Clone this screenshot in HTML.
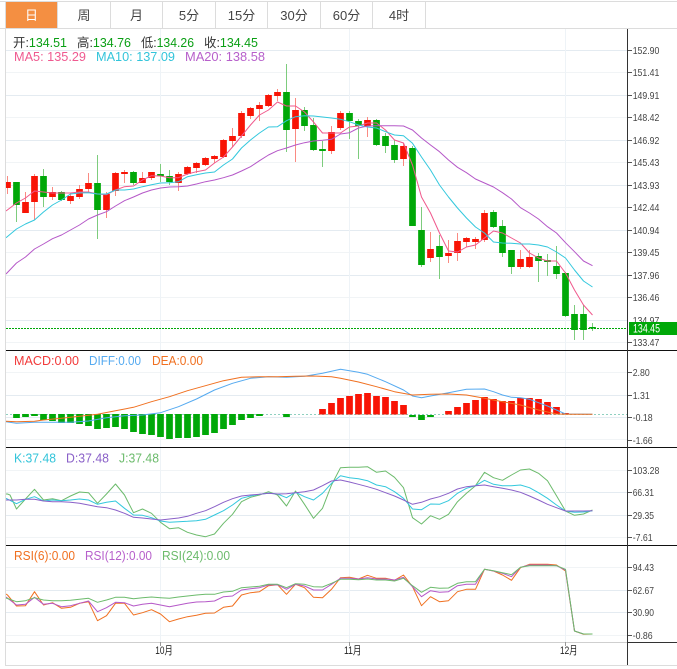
<!DOCTYPE html>
<html>
<head>
<meta charset="utf-8">
<style>
html,body{margin:0;padding:0;background:#fff;width:677px;height:669px;overflow:hidden}
svg{display:block}
text{font-family:"Liberation Sans","Noto Sans CJK SC",sans-serif}
.ax{font-size:10.5px;fill:#444}
.t{font-size:12.5px}
.tab{font-size:13px;fill:#444;text-anchor:middle}
.dt{font-size:11px;fill:#222}
</style>
</head>
<body>
<svg width="677" height="669" viewBox="0 0 677 669" xmlns="http://www.w3.org/2000/svg">
<rect width="677" height="669" fill="#fff"/>

<!-- grid -->
<g fill="none" stroke-width="1">
<path stroke="#f1f4f6" d="M6 72.5H627M6 117.5H627M6 162.5H627M6 207.5H627M6 252.5H627M6 297.5H627M6 342.5H627M6 372.5H627M6 439.5H627M6 470.5H627M6 537.5H627M6 567.5H627M6 635.5H627"/>
<path stroke="#e4ebf1" d="M6 50.5H627M6 95.5H627M6 140.5H627M6 185.5H627M6 230.5H627M6 275.5H627M6 320.5H627M6 395.5H627M6 417.5H627M6 492.5H627M6 515.5H627M6 590.5H627M6 612.5H627"/>
<path stroke="#eef3f7" d="M160.5 29V642M349.5 29V642M565.5 29V642"/>
</g>

<!-- candle wicks -->
<path fill="none" stroke="#fa8a82" stroke-width="1" d="M7.5 176V194M25.5 192V213M34.5 174V220M52.5 187V200M70.5 193V204M79.5 185V199M88.5 173V192M106.5 192V218M115.5 172V196M124.5 170V183M142.5 172V183M151.5 172V180M178.5 172V191M187.5 166V175M196.5 162V173M205.5 157V166M214.5 155V163M223.5 139V158M232.5 128V147M241.5 111V138M250.5 107V119M259.5 102V121M268.5 94V107M277.5 89V101M295.5 98V162M331.5 126V154M340.5 111V130M367.5 117V137M403.5 143V166M430.5 232V262M448.5 240V263M457.5 233V261M466.5 237V247M475.5 237V249M484.5 210V242M520.5 250V269M529.5 250V268"/>
<path fill="none" stroke="#7dcc7d" stroke-width="1" d="M16.5 182V222M43.5 169V207M61.5 191V201M97.5 155V239M133.5 171V185M160.5 164V182M169.5 170V185M286.5 64V152M304.5 107V131M313.5 118V151M322.5 141V167M349.5 111V139M358.5 119V159M376.5 119V146M385.5 133V153M394.5 140V163M412.5 146V226M421.5 207V267M439.5 235V279M493.5 210V228M502.5 220V257M511.5 250V274M538.5 253V282M547.5 254V276M556.5 246V279M565.5 272V317M574.5 305V340M583.5 305V340M592.5 323V331"/>

<!-- candle bodies -->
<path fill="none" stroke="#f81405" stroke-width="6.7" d="M7.5 182V188M25.5 202V213M34.5 176V202M52.5 192V197M70.5 196V201M79.5 189V197M88.5 183V189M106.5 194V210M115.5 173V191M124.5 172V174M142.5 178V183M151.5 172V178M178.5 174V183M187.5 167V174M196.5 163V168M205.5 158V165M214.5 156V159M223.5 140V157M232.5 136V141M241.5 113V136M250.5 108V116M259.5 105V109M268.5 95V106M277.5 92V96M295.5 110V129M331.5 132V151M340.5 113V128M367.5 120V126M403.5 146V159M430.5 249V258M448.5 253V256M457.5 241V253M466.5 238V242M475.5 239V242M484.5 213V240M520.5 259V267M529.5 257V267"/>
<path fill="none" stroke="#00a808" stroke-width="6.7" d="M16.5 182V205M43.5 176V197M61.5 192V200M97.5 183V210M133.5 172V183M160.5 174V176M169.5 176V182M286.5 92V130M304.5 110V126M313.5 125V150M322.5 149V151M349.5 113V121M358.5 121V126M376.5 120V145M385.5 136V146M394.5 145V160M412.5 148V226M421.5 230V265M439.5 246V257M493.5 212V227M502.5 226V253M511.5 250V267M538.5 256V261M547.5 260V262M556.5 266V274M565.5 273V316M574.5 314V330M583.5 314V330M592.5 327V328.5"/>

<!-- MA lines -->
<g fill="none" stroke-width="1" stroke-linejoin="round">
<polyline stroke="#f0588c" points="6,211 16.5,203 25.5,198 34.5,191 43.5,192 52.5,193 61.5,193 70.5,193 79.5,192 88.5,192 97.5,194 106.5,194.7 115.5,190 124.5,186.7 133.5,186 142.5,180 151.5,175.7 160.5,176 169.5,177.7 178.5,177.7 187.5,174 196.5,171.7 205.5,170 214.5,163 223.5,157 232.5,147 241.5,136 250.5,125 259.5,115 268.5,110 277.5,102 286.5,106 295.5,106 304.5,112 313.5,122 322.5,133 331.5,133 340.5,133 349.5,127 358.5,126 367.5,123 376.5,123 385.5,130 394.5,140 403.5,143 412.5,165 421.5,197 430.5,213 439.5,233 448.5,251 457.5,252 466.5,247 475.5,245 484.5,238 493.5,231 502.5,233 511.5,238 520.5,243 529.5,253 538.5,258 547.5,261 556.5,261 565.5,273 574.5,290 583.5,305 592.5,315"/>
<polyline stroke="#33c8dd" points="6,237.7 16.5,229 25.5,224 34.5,220 43.5,212 52.5,205 61.5,200 70.5,194 79.5,193 88.5,192.7 97.5,194 106.5,194 115.5,190 124.5,190 133.5,189 142.5,186.7 151.5,184.7 160.5,183 169.5,182.7 178.5,181.7 187.5,176.7 196.5,174.7 205.5,173 214.5,172 223.5,165 232.5,159 241.5,148 250.5,140 259.5,133 268.5,127 277.5,126.7 286.5,120.7 295.5,116.7 304.5,115.7 313.5,116 322.5,117 331.5,118 340.5,119.3 349.5,121.7 358.5,125 367.5,127 376.5,128 385.5,131.7 394.5,135 403.5,135.7 412.5,143.3 421.5,157 430.5,170 439.5,185 448.5,197 457.5,208 466.5,218 475.5,227 484.5,233 493.5,242 502.5,243 511.5,243.3 520.5,244 529.5,244 538.5,245 547.5,247 556.5,252 565.5,258 574.5,270 583.5,281 592.5,287"/>
<polyline stroke="#b558c8" points="6,274 16.5,263 25.5,257 34.5,249 43.5,244 52.5,238.7 61.5,235 70.5,230 79.5,225 88.5,219 97.5,215 106.5,211.7 115.5,206 124.5,200.7 133.5,197 142.5,193 151.5,190 160.5,188 169.5,187 178.5,186.7 187.5,186 196.5,184 205.5,181.7 214.5,180 223.5,177.7 232.5,175 241.5,171 250.5,166.7 259.5,160.7 268.5,155 277.5,150.7 286.5,148 295.5,145 304.5,142.7 313.5,141 322.5,140.3 331.5,139.3 340.5,134 349.5,132.7 358.5,128 367.5,126 376.5,125.7 385.5,125.7 394.5,125.7 403.5,126 412.5,130 421.5,138 430.5,145 439.5,151.7 448.5,160 457.5,167.3 466.5,172.7 475.5,179 484.5,183 493.5,187 502.5,192.7 511.5,199 520.5,207.7 529.5,213 538.5,219 547.5,226.7 556.5,233 565.5,242.7 574.5,251.7 583.5,261 592.5,265.7"/>
</g>

<!-- last price dotted line -->
<path fill="none" stroke="#00a808" stroke-width="1" stroke-dasharray="2 1" d="M6 328.5H628"/>

<!-- MACD -->
<path fill="none" stroke="#8fd0c0" stroke-width="1" stroke-dasharray="2 2" d="M6 414.5H627"/>
<path fill="none" stroke="#00a808" stroke-width="6.7" d="M16.5 414V418M25.5 414V417M34.5 414V416M43.5 414V420M52.5 414V421M61.5 414V423M70.5 414V423M79.5 414V424M88.5 414V426M97.5 414V429M106.5 414V428M115.5 414V427M124.5 414V429M133.5 414V432M142.5 414V434M151.5 414V435M160.5 414V437M169.5 414V439M178.5 414V438M187.5 414V438M196.5 414V437M205.5 414V435M214.5 414V433M223.5 414V429M232.5 414V425M241.5 414V420M250.5 414V418M259.5 414V416M286.5 414V417M412.5 415V417M421.5 415V420M430.5 415V417"/>
<path fill="none" stroke="#f81405" stroke-width="6.7" d="M322.5 409V414.5M331.5 403V414.5M340.5 398V414.5M349.5 396V414.5M358.5 394V414.5M367.5 393V414.5M376.5 396V414.5M385.5 397V414.5M394.5 401V414.5M403.5 405V414.5M448.5 411V414.5M457.5 407V414.5M466.5 403V414.5M475.5 400V414.5M484.5 397V414.5M493.5 399V414.5M502.5 401V414.5M511.5 401V414.5M520.5 398V414.5M529.5 398V414.5M538.5 399V414.5M547.5 402V414.5M556.5 407V414.5M565.5 413V414.5"/>
<g fill="none" stroke-width="1" stroke-linejoin="round">
<polyline stroke="#55aaf0" points="6,421.7 16.5,423.3 34.5,422.3 52.5,422.3 70.5,422.3 88.5,421 106.5,417.7 124.5,415.7 142.5,415 160.5,412.7 178.5,406.7 196.5,399 214.5,390 232.5,383.3 250.5,378.3 268.5,376.7 286.5,377.3 304.5,376.3 322.5,373.3 340.5,369.3 358.5,372.3 367.5,374.3 385.5,381.7 403.5,390 412.5,396 421.5,397.7 430.5,396 448.5,392.7 466.5,389.3 484.5,389 493.5,391.7 502.5,395 511.5,397.3 520.5,397.7 529.5,399.3 538.5,402.7 547.5,406 556.5,410 565.5,414 592.5,414.3"/>
<polyline stroke="#f07020" points="6,421.3 16.5,421.7 34.5,421.3 43.5,420 61.5,418.3 79.5,416.3 97.5,414.3 115.5,410.7 133.5,407.3 151.5,401.7 169.5,396.7 187.5,390.7 205.5,385.7 223.5,380.7 241.5,377.3 259.5,376.7 277.5,376.7 295.5,376.3 313.5,376 331.5,376.7 340.5,378.3 358.5,382 376.5,386.7 394.5,391.7 412.5,395 430.5,394.3 448.5,394 466.5,395 484.5,398.3 502.5,401.7 520.5,405 538.5,410 556.5,414 565.5,414.3 592.5,414.3"/>
</g>

<!-- KDJ -->
<g fill="none" stroke-width="1" stroke-linejoin="round">
<polyline stroke="#6cbb6c" points="6,494 7.5,494 10,495 16.5,509 25.5,499 34.5,489.3 43.5,500 52.5,498.7 61.5,500.7 70.5,496 79.5,492 88.5,492.7 97.5,503.3 106.5,494 115.5,484 124.5,495 133.5,512.7 142.5,509 151.5,513.3 160.5,522.3 169.5,528.7 178.5,527.7 187.5,532.3 196.5,535 205.5,536.7 214.5,534 223.5,523.3 232.5,514.3 241.5,501.7 250.5,497.3 259.5,495 268.5,491.7 277.5,495 286.5,506 295.5,491 304.5,504.3 313.5,518.3 322.5,508.3 331.5,485 340.5,467.7 349.5,467.3 358.5,467.3 367.5,466.7 376.5,472.3 385.5,471 394.5,477.3 403.5,487.7 412.5,517.7 421.5,524 430.5,515.7 439.5,519.3 448.5,514.3 457.5,501.7 466.5,493.3 475.5,485.7 484.5,472.3 493.5,477.7 502.5,480.3 511.5,475 520.5,470 529.5,469 538.5,473.3 547.5,480.7 556.5,495.7 565.5,511 574.5,515.3 583.5,514 592.5,510"/>
<polyline stroke="#33c8dd" points="6,498.3 16.5,503.7 25.5,499.3 34.5,496.7 43.5,501 52.5,500 61.5,500.7 70.5,500 79.5,499 88.5,500 97.5,504.3 106.5,502.3 115.5,501 124.5,508.3 133.5,515 142.5,515.3 151.5,517.7 160.5,521 169.5,522.3 178.5,521.7 187.5,521.3 196.5,520.7 205.5,519.3 214.5,515 223.5,510.7 232.5,505 241.5,498.3 250.5,496 259.5,494.3 268.5,493.3 277.5,494 286.5,497.7 295.5,492.3 304.5,496.7 313.5,500 322.5,493.3 331.5,483.3 340.5,475.7 349.5,477.7 358.5,478.7 367.5,480.7 376.5,485 385.5,486.7 394.5,491.7 403.5,498.3 412.5,509 421.5,509.7 430.5,504 439.5,504.3 448.5,500.7 457.5,493.3 466.5,488.3 475.5,485.7 484.5,480.3 493.5,484.3 502.5,485.7 511.5,485.7 520.5,485 529.5,487.7 538.5,492.7 547.5,498.3 556.5,505 565.5,511 574.5,512.3 583.5,512 592.5,510.7"/>
<polyline stroke="#8a60c8" points="6,500 16.5,500 25.5,499.3 34.5,499.3 43.5,501 52.5,501.7 61.5,501.7 70.5,502.3 79.5,503.3 88.5,505 97.5,506.7 106.5,507.7 115.5,510 124.5,513.3 133.5,517.3 142.5,518 151.5,519 160.5,520 169.5,519 178.5,518 187.5,516.3 196.5,513.3 205.5,510.7 214.5,506.7 223.5,502.3 232.5,498.7 241.5,496 250.5,495 259.5,494.3 268.5,493.3 277.5,494 286.5,493.7 295.5,492.7 304.5,491.7 313.5,490 322.5,485.7 331.5,481 340.5,480 349.5,482 358.5,484.3 367.5,486.7 376.5,489.3 385.5,492.7 394.5,496 403.5,500 412.5,504.3 421.5,502.3 430.5,499 439.5,496.7 448.5,493.3 457.5,489 466.5,486.7 475.5,485.7 484.5,485 493.5,486.7 502.5,488.3 511.5,490 520.5,492.3 529.5,496 538.5,500 547.5,504.3 556.5,507.7 565.5,511 574.5,511 583.5,511 592.5,510.7"/>
</g>

<!-- RSI -->
<g fill="none" stroke-width="1" stroke-linejoin="round">
<polyline stroke="#f07020" points="6,594 7.5,595 16.5,606 25.5,605.7 34.5,591.7 43.5,605 52.5,602.7 61.5,608.3 70.5,607.3 79.5,603.3 88.5,601.7 97.5,620.7 106.5,615.7 115.5,603.3 124.5,603.3 133.5,615 142.5,612.7 151.5,609.7 160.5,614 169.5,621.7 178.5,619 187.5,616.7 196.5,615.3 205.5,613.3 214.5,613 223.5,607.3 232.5,606 241.5,595 250.5,592.7 259.5,591.7 268.5,585.7 277.5,584.7 286.5,594.3 295.5,584.3 304.5,587.7 313.5,597.3 322.5,597.7 331.5,589.3 340.5,577.7 349.5,577.3 358.5,579 367.5,575.3 376.5,578.3 385.5,578.3 394.5,580.3 403.5,575 412.5,586.7 421.5,605.7 430.5,596.7 439.5,601.7 448.5,600.7 457.5,591.7 466.5,589.3 475.5,589.3 484.5,569.3 493.5,571 502.5,575 511.5,580.3 520.5,567.7 529.5,564.3 538.5,564.3 547.5,564.3 556.5,565 565.5,571 574.5,631 583.5,634.3 592.5,634"/>
<polyline stroke="#b558c8" points="6,597 16.5,605 25.5,604.3 34.5,597.3 43.5,604.3 52.5,603.3 61.5,606.7 70.5,605.7 79.5,603.3 88.5,601 97.5,611.7 106.5,607.7 115.5,602.3 124.5,602.7 133.5,606 142.5,604.3 151.5,603.3 160.5,605 169.5,606.7 178.5,605 187.5,603.3 196.5,602 205.5,601.7 214.5,601 223.5,596.7 232.5,596 241.5,590 250.5,588.7 259.5,587.7 268.5,585 277.5,584.7 286.5,589.3 295.5,584.3 304.5,586 313.5,590 322.5,590 331.5,584.3 340.5,578.3 349.5,578.3 358.5,579 367.5,577.7 376.5,579 385.5,579 394.5,580 403.5,577.3 412.5,586.7 421.5,596.7 430.5,590.7 439.5,592.3 448.5,591.7 457.5,585.7 466.5,584.3 475.5,584.3 484.5,569.3 493.5,571 502.5,573.3 511.5,576.7 520.5,567.3 529.5,565 538.5,565 547.5,565 556.5,565.7 565.5,570 574.5,631 583.5,634 592.5,634"/>
<polyline stroke="#6cbb6c" points="6,598 16.5,601.7 25.5,600.7 34.5,597.7 43.5,600 52.5,600.7 61.5,600.7 70.5,600.3 79.5,599.3 88.5,598.3 97.5,602.3 106.5,600 115.5,597.3 124.5,597.3 133.5,598.7 142.5,597.7 151.5,597 160.5,597.7 169.5,598.3 178.5,597 187.5,596 196.5,595 205.5,594.3 214.5,594.3 223.5,592 232.5,591.3 241.5,587.7 250.5,587 259.5,586.3 268.5,584.3 277.5,584.3 286.5,587.7 295.5,583.7 304.5,584.3 313.5,586.7 322.5,587 331.5,583.3 340.5,579.3 349.5,579.3 358.5,579.7 367.5,579 376.5,580 385.5,580 394.5,581 403.5,578.3 412.5,585.7 421.5,592.3 430.5,587.3 439.5,588.3 448.5,588 457.5,583.3 466.5,581.7 475.5,581.7 484.5,569.3 493.5,570.7 502.5,572.7 511.5,574.7 520.5,567.3 529.5,565.7 538.5,565.7 547.5,565.7 556.5,565.7 565.5,569.3 574.5,631 583.5,634 592.5,634"/>
</g>

<!-- clip left overflow -->
<rect x="0" y="0" width="5" height="669" fill="#fff"/>

<!-- frame -->
<g fill="none" stroke-width="1">
<path stroke="#dcdcdc" d="M5.5 28V665.5H677M0 1.5H677M0 28.5H677"/>
<path stroke="#cfcfcf" d="M6 642.5H627"/>
<path stroke="#111" d="M6 350.5H677M6 447.5H677M6 545.5H677"/>
<path stroke="#333" d="M627.5 29V665M627 642.5H677"/>
<path stroke="#555" d="M628 50.5H632M628 72.5H632M628 95.5H632M628 117.5H632M628 140.5H632M628 162.5H632M628 185.5H632M628 207.5H632M628 230.5H632M628 252.5H632M628 275.5H632M628 297.5H632M628 342.5H632M628 372.5H632M628 395.5H632M628 417.5H632M628 440.5H632M628 470.5H632M628 492.5H632M628 515.5H632M628 537.5H632M628 567.5H632M628 590.5H632M628 612.5H632M628 635.5H632"/>
<path stroke="#999" d="M160.5 642V646M349.5 642V646M565.5 642V646"/>
</g>

<!-- tabs -->
<rect x="6" y="2" width="51" height="26" fill="#f48f42"/>
<path fill="none" stroke="#dcdcdc" d="M5.5 1V28M57.5 1V28M110.5 1V28M162.5 1V28M215.5 1V28M267.5 1V28M320.5 1V28M372.5 1V28M425.5 1V28"/>
<text class="tab" x="31.5" y="20" style="fill:#fff">日</text>
<text class="tab" x="84" y="20">周</text>
<text class="tab" x="136.5" y="20">月</text>
<text class="tab" x="189" y="20">5分</text>
<text class="tab" x="241.5" y="20">15分</text>
<text class="tab" x="294" y="20">30分</text>
<text class="tab" x="346.5" y="20">60分</text>
<text class="tab" x="399" y="20">4时</text>

<!-- header legends -->
<text class="t" x="13" y="47" textLength="54" lengthAdjust="spacingAndGlyphs" fill="#333">开:<tspan fill="#0a9f14">134.51</tspan></text>
<text class="t" x="77" y="47" textLength="54" lengthAdjust="spacingAndGlyphs" fill="#333">高:<tspan fill="#0a9f14">134.76</tspan></text>
<text class="t" x="141" y="47" textLength="53" lengthAdjust="spacingAndGlyphs" fill="#333">低:<tspan fill="#0a9f14">134.26</tspan></text>
<text class="t" x="204" y="47" textLength="54" lengthAdjust="spacingAndGlyphs" fill="#333">收:<tspan fill="#0a9f14">134.45</tspan></text>
<text class="t" x="14" y="61" textLength="72" lengthAdjust="spacingAndGlyphs" fill="#ef5a90">MA5: 135.29</text>
<text class="t" x="96" y="61" textLength="79" lengthAdjust="spacingAndGlyphs" fill="#33c4da">MA10: 137.09</text>
<text class="t" x="185" y="61" textLength="80" lengthAdjust="spacingAndGlyphs" fill="#b760cb">MA20: 138.58</text>

<text class="t" x="14" y="365" textLength="65" lengthAdjust="spacingAndGlyphs" fill="#f23a3a">MACD:0.00</text>
<text class="t" x="89" y="365" textLength="52" lengthAdjust="spacingAndGlyphs" fill="#55aaf0">DIFF:0.00</text>
<text class="t" x="152" y="365" textLength="51" lengthAdjust="spacingAndGlyphs" fill="#f07020">DEA:0.00</text>

<text class="t" x="14" y="462.5" textLength="42" lengthAdjust="spacingAndGlyphs" fill="#33c4da">K:37.48</text>
<text class="t" x="66" y="462.5" textLength="43" lengthAdjust="spacingAndGlyphs" fill="#8a60c8">D:37.48</text>
<text class="t" x="119" y="462.5" textLength="40" lengthAdjust="spacingAndGlyphs" fill="#6cbb6c">J:37.48</text>

<text class="t" x="14" y="560" textLength="61" lengthAdjust="spacingAndGlyphs" fill="#f07020">RSI(6):0.00</text>
<text class="t" x="85" y="560" textLength="67" lengthAdjust="spacingAndGlyphs" fill="#b760cb">RSI(12):0.00</text>
<text class="t" x="162" y="560" textLength="68" lengthAdjust="spacingAndGlyphs" fill="#6cbb6c">RSI(24):0.00</text>

<!-- axis labels -->
<text class="ax" x="632.7" y="54" textLength="26.7" lengthAdjust="spacingAndGlyphs">152.90</text>
<text class="ax" x="632.7" y="76" textLength="26.7" lengthAdjust="spacingAndGlyphs">151.41</text>
<text class="ax" x="632.7" y="99" textLength="26.7" lengthAdjust="spacingAndGlyphs">149.91</text>
<text class="ax" x="632.7" y="121" textLength="26.7" lengthAdjust="spacingAndGlyphs">148.42</text>
<text class="ax" x="632.7" y="144" textLength="26.7" lengthAdjust="spacingAndGlyphs">146.92</text>
<text class="ax" x="632.7" y="166" textLength="26.7" lengthAdjust="spacingAndGlyphs">145.43</text>
<text class="ax" x="632.7" y="189" textLength="26.7" lengthAdjust="spacingAndGlyphs">143.93</text>
<text class="ax" x="632.7" y="211" textLength="26.7" lengthAdjust="spacingAndGlyphs">142.44</text>
<text class="ax" x="632.7" y="234" textLength="26.7" lengthAdjust="spacingAndGlyphs">140.94</text>
<text class="ax" x="632.7" y="256" textLength="26.7" lengthAdjust="spacingAndGlyphs">139.45</text>
<text class="ax" x="632.7" y="279" textLength="26.7" lengthAdjust="spacingAndGlyphs">137.96</text>
<text class="ax" x="632.7" y="301" textLength="26.7" lengthAdjust="spacingAndGlyphs">136.46</text>
<text class="ax" x="632.7" y="324" textLength="26.7" lengthAdjust="spacingAndGlyphs">134.97</text>
<text class="ax" x="632.7" y="346" textLength="26.7" lengthAdjust="spacingAndGlyphs">133.47</text>
<text class="ax" x="632.7" y="376" textLength="17" lengthAdjust="spacingAndGlyphs">2.80</text>
<text class="ax" x="632.7" y="399" textLength="17" lengthAdjust="spacingAndGlyphs">1.31</text>
<text class="ax" x="632.7" y="421" textLength="20" lengthAdjust="spacingAndGlyphs">-0.18</text>
<text class="ax" x="632.7" y="444" textLength="20" lengthAdjust="spacingAndGlyphs">-1.66</text>
<text class="ax" x="632.7" y="474" textLength="26.7" lengthAdjust="spacingAndGlyphs">103.28</text>
<text class="ax" x="632.7" y="496" textLength="21.3" lengthAdjust="spacingAndGlyphs">66.31</text>
<text class="ax" x="632.7" y="519" textLength="21.3" lengthAdjust="spacingAndGlyphs">29.35</text>
<text class="ax" x="632.7" y="541" textLength="20" lengthAdjust="spacingAndGlyphs">-7.61</text>
<text class="ax" x="632.7" y="571" textLength="21.3" lengthAdjust="spacingAndGlyphs">94.43</text>
<text class="ax" x="632.7" y="594" textLength="21.3" lengthAdjust="spacingAndGlyphs">62.67</text>
<text class="ax" x="632.7" y="616" textLength="21.3" lengthAdjust="spacingAndGlyphs">30.90</text>
<text class="ax" x="632.7" y="639" textLength="20" lengthAdjust="spacingAndGlyphs">-0.86</text>

<!-- current price box -->
<rect x="629" y="322" width="48" height="13" fill="#00a808"/>
<text x="633" y="332.5" font-size="11.5" fill="#fff" textLength="27" lengthAdjust="spacingAndGlyphs">134.45</text>

<!-- date labels -->
<text class="dt" x="155.3" y="654" textLength="17.5" lengthAdjust="spacingAndGlyphs">10月</text>
<text class="dt" x="344" y="654" textLength="17.5" lengthAdjust="spacingAndGlyphs">11月</text>
<text class="dt" x="560" y="654" textLength="17.5" lengthAdjust="spacingAndGlyphs">12月</text>
</svg>
</body>
</html>
